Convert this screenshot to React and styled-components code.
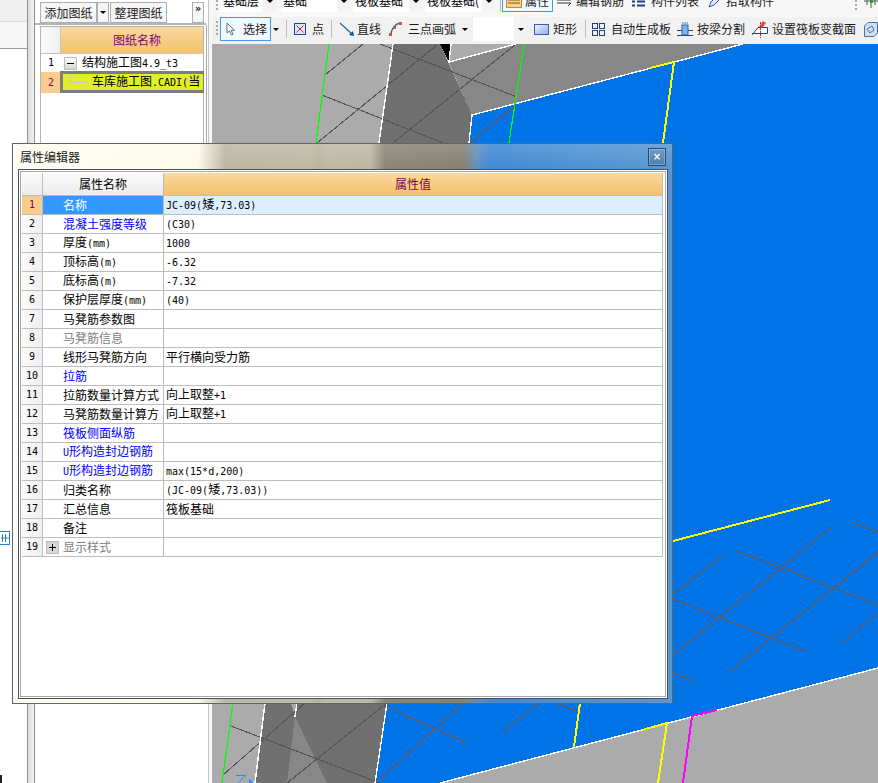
import React from "react";
import styled, { createGlobalStyle } from "styled-components";

const GlobalStyle = createGlobalStyle`
  html, body { margin: 0; padding: 0; background: #fff; overflow: hidden; }
  * { box-sizing: border-box; }
`;

const cjk = `"Noto Sans CJK SC", "Liberation Sans", sans-serif`;

const Page = styled.div`
  position: relative;
  display: flex;
  width: 878px;
  height: 783px;
  overflow: hidden;
  font-family: ${cjk};
  font-size: 12px;
  line-height: 18px;
  color: #000;
`;

/* left rail */
const Rail = styled.div`
  display: flex;
  width: 35px;
  flex: none;
`;
const RailPane = styled.div`
  width: 28px;
  border-right: 1px solid #8f8f8f;
  display: flex;
  flex-direction: column;
`;
const RailTop = styled.div`
  height: 22px;
  background: #efefef;
  border-bottom: 1px solid #dcdcdc;
`;
const RailTab = styled.div`
  height: 27px;
  background: #f6f6f6;
  border-bottom: 1px solid #9a9a9a;
`;
const RailBody = styled.div`
  flex: 1;
  background: #fff;
  padding-top: 482px;
`;
const RailMark = styled.div`
  width: 2px;
  height: 8px;
  margin-top: 230px;
  background: #222;
`;
const RailStrip = styled.div`
  width: 7px;
  background: linear-gradient(90deg, #dcdcdc, #f0f0f0);
  border-right: 1px solid #8f8f8f;
`;

/* drawing list */
const DrawingPanel = styled.div`
  width: 173px;
  flex: none;
  background: #fff;
`;
const PanelBar = styled.div`
  display: flex;
  height: 25px;
  width: 171px;
  padding: 2px 0 0 5px;
  border-bottom: 2px solid #b4b4b4;
`;
const PanelButton = styled.div`
  width: ${(p) => p.$w}px;
  height: 21px;
  margin-left: ${(p) => p.$ml || 0}px;
  display: flex;
  align-items: center;
  justify-content: center;
  background: #f6f6f6;
  border: 1px solid #aeaeae;
  color: #222;
`;
const MoreButton = styled(PanelButton)`
  align-items: flex-start;
  font-family: "DejaVu Sans Mono", monospace;
  font-size: 10px;
  font-weight: bold;
  line-height: 11px;
`;
const PanelBox = styled.div`
  width: 172px;
  height: 640px;
  padding: 1px 2px 0 5px;
  border-right: 1px solid #a8a8a8;
`;
const DrawingGrid = styled.div`
  height: 639px;
  border: 1px solid #b4b4b4;
  border-bottom: 2px solid #b4b4b4;
`;
const DrawingRow = styled.div`
  display: grid;
  grid-template-columns: 20px 1fr;
  height: ${(p) => p.$h}px;
`;
const DrawingHead = styled.div`
  display: flex;
  align-items: center;
  justify-content: center;
  padding-left: 10px;
  color: #800080;
  font-size: 12px;
  background: linear-gradient(180deg, #fad99f, #f3c16b);
  border-bottom: 1px solid #c9c9c9;
`;
const NumCell = styled.div`
  display: flex;
  align-items: center;
  justify-content: center;
  font-family: "DejaVu Sans Mono", monospace;
  font-size: 10px;
  color: ${(p) => (p.$active ? "#800060" : "#000")};
  background: ${(p) => (p.$active ? "#fbcd8d" : "linear-gradient(90deg, #fbfbfb, #efefef)")};
  border-right: 1px solid #c4c4c4;
  border-bottom: 1px solid #c4c4c4;
`;
const PlainNum = styled(NumCell)`
  background: ${(p) => (p.$active ? "#fbcd8d" : "#fff")};
  border: 0;
`;
const TreeCell = styled.div`
  display: flex;
  align-items: center;
  padding-left: 3px;
  gap: 5px;
  white-space: nowrap;
  overflow: hidden;
`;
const TreeBox = styled.span`
  width: 13px;
  height: 13px;
  flex: none;
  display: flex;
  align-items: center;
  justify-content: center;
  background: linear-gradient(180deg, #fff, #d6d6d6);
  border: 1px solid #bdbdbd;
  &::after {
    content: "";
    width: 7px;
    height: 1px;
    background: #000;
  }
`;
const SelectedCell = styled.div`
  position: relative;
  margin: -1px -1px 0 -1px;
  height: 22px;
  padding-left: 29px;
  background: #dff126;
  border: 3px solid #7d7d7d;
  border-right-width: 1px;
  display: flex;
  align-items: center;
  white-space: nowrap;
  overflow: hidden;
  &::before {
    content: "";
    position: absolute;
    left: 7px;
    top: -3px;
    width: 15px;
    height: 11px;
    border-left: 1px solid #c8c8c8;
    border-bottom: 1px solid #c8c8c8;
  }
`;

/* main area */
const Main = styled.div`
  flex: 1;
  min-width: 0;
  display: flex;
  flex-direction: column;
  background: #f7f7f7;
  padding-left: 3px;
  border-left: 1px solid #c4c4c4;
`;
const TopBar = styled.div`
  display: flex;
  align-items: flex-end;
  height: 12px;
  overflow: hidden;
  padding-left: 4px;
  flex: none;
`;
const Grip = styled.span`
  width: 2px;
  height: ${(p) => p.$h || 16}px;
  flex: none;
  margin-left: ${(p) => p.$ml || 0}px;
  background: repeating-linear-gradient(180deg, #a9a9a9 0 2px, transparent 2px 4px);
`;
const TopCombo = styled.div`
  position: relative;
  width: ${(p) => p.$w}px;
  height: 22px;
  flex: none;
  margin-left: ${(p) => p.$ml}px;
  padding-left: 2px;
  display: flex;
  align-items: center;
  background: #fff;
  white-space: nowrap;
  overflow: hidden;
`;
const ComboArrow = styled.span`
  position: absolute;
  right: 0;
  top: 0;
  bottom: 0;
  width: 13px;
  background: #f3f3f3;
  display: flex;
  align-items: center;
  justify-content: center;
  &::after {
    content: "";
    border: 3px solid transparent;
    border-top: 3px solid #000;
    border-bottom: 0;
  }
`;
const Tool = styled.div`
  display: flex;
  align-items: center;
  flex: none;
  height: ${(p) => p.$h || 24}px;
  margin-left: ${(p) => p.$ml || 0}px;
  gap: ${(p) => p.$gap || 0}px;
  color: #1a1a1a;
  white-space: nowrap;
`;
const ActiveTool = styled(Tool)`
  width: ${(p) => p.$w}px;
  padding-left: ${(p) => p.$pad}px;
  background: #f3f9ff;
  border: 1px solid #3a9bf4;
`;
const Arrow = styled.span`
  flex: none;
  margin-left: ${(p) => p.$ml}px;
  border: 3px solid transparent;
  border-top: 3px solid #000;
  border-bottom: 0;
`;
const Sep = styled.span`
  width: 1px;
  height: 18px;
  flex: none;
  margin-left: ${(p) => p.$ml}px;
  background: #bdbdbd;
`;
const ToolRow = styled.div`
  display: flex;
  align-items: center;
  height: 27px;
  margin-top: 5px;
  padding: 0 0 3px 4px;
  background: #f1f1f1;
  overflow: hidden;
  flex: none;
`;
const DrawCombo = styled.div`
  position: relative;
  width: 54px;
  height: 24px;
  flex: none;
  margin-left: 5px;
  background: #fff;
`;
const CanvasWrap = styled.div`
  flex: 1;
  min-height: 0;
  background: #ababab;
`;
const CanvasSvg = styled.svg`
  display: block;
  width: 666px;
  height: 739px;
`;

/* dialog */
const glass = `linear-gradient(90deg,
  #fffdf2 0, #fdfaea 185px, #d9d4c1 200px, #bdb6a2 212px, #bfb8a4 300px, #b9b39a 305px,
  #bfb8a4 312px, #bdb6a2 358px, #8a8574 372px, #86806f 450px, #5f8fbf 464px, #3f88d4 478px,
  #4b90d3 560px, #5a96d2 661px)`;

const Dialog = styled.div`
  position: absolute;
  left: 12px;
  top: 143px;
  width: 661px;
  height: 561px;
  display: flex;
  flex-direction: column;
  padding: 0 4px 4px 5px;
  border: 1px solid #5c6670;
  background: linear-gradient(180deg, rgba(255, 255, 255, 0.14), rgba(255, 255, 255, 0) 26px), ${glass};
`;
const TitleBar = styled.div`
  display: flex;
  align-items: center;
  justify-content: space-between;
  height: 25px;
  flex: none;
  padding: 1px 2px 0 2px;
`;
const TitleText = styled.div`
  color: #222;
  font-size: 12px;
`;
const CloseButton = styled.div`
  width: 18px;
  height: 18px;
  display: flex;
  align-items: center;
  justify-content: center;
  color: #fff;
  font-family: "DejaVu Sans", sans-serif;
  font-size: 10px;
  font-weight: bold;
  background: linear-gradient(180deg, #6f9cc8, #4c7fb2);
  border: 1px solid #2c4a66;
  box-shadow: inset 0 0 0 1px rgba(255, 255, 255, 0.25);
`;
const Client = styled.div`
  flex: 1;
  min-height: 0;
  background: #fff;
  border: 1px solid #46525c;
  padding: 1px;
`;
const ClientInner = styled.div`
  height: 100%;
  background: #fff;
  border: 1px solid #a8a8a8;
  padding: 1px;
`;
const Grid = styled.div`
  width: 641px;
`;
const Row = styled.div`
  display: grid;
  grid-template-columns: 21px 121px 1fr;
  height: ${(p) => p.$h || 19}px;
`;
const Cell = styled.div`
  display: flex;
  align-items: center;
  overflow: hidden;
  white-space: nowrap;
  border-right: 1px solid #bdbdbd;
  border-bottom: 1px solid #bdbdbd;
`;
const RowNum = styled(Cell)`
  justify-content: center;
  font-family: "DejaVu Sans Mono", monospace;
  font-size: 10px;
  color: ${(p) => (p.$active ? "#800060" : "#000")};
  background: ${(p) => (p.$active ? "#fbcd8d" : "linear-gradient(90deg, #fbfbfb, #efefef)")};
`;
const NameCell = styled(Cell)`
  padding-left: ${(p) => (p.$tree ? 3 : 20)}px;
  gap: 4px;
  color: ${(p) => (p.$active ? "#fff" : p.$tone === "blue" ? "#0000ff" : p.$tone === "gray" ? "#808080" : "#000")};
  background: ${(p) => (p.$active ? "#3399ff" : "#fff")};
`;
const ValueCell = styled(Cell)`
  padding-left: 2px;
  background: ${(p) => (p.$active ? "#ddeeff" : "#fff")};
`;
const HeadBlank = styled(Cell)`
  background: linear-gradient(180deg, #fbfbfb, #ececec);
`;
const HeadName = styled(HeadBlank)`
  justify-content: center;
`;
const HeadValue = styled(Cell)`
  justify-content: center;
  color: #800060;
  background: linear-gradient(180deg, #fad99f, #f3c16b);
`;
const PlusBox = styled.span`
  position: relative;
  width: 13px;
  height: 13px;
  flex: none;
  background: #d6d6d6;
  border: 1px solid #bdbdbd;
  &::before {
    content: "";
    position: absolute;
    left: 2px;
    top: 5px;
    width: 7px;
    height: 1px;
    background: #000;
  }
  &::after {
    content: "";
    position: absolute;
    left: 5px;
    top: 2px;
    width: 1px;
    height: 7px;
    background: #000;
  }
`;
const Latin = styled.span`
  font-family: "DejaVu Sans Mono", monospace;
  font-size: 10px;
  white-space: pre;
`;

const Mixed = ({ text }) =>
  text
    .split(/([\x20-\x7e]+)/)
    .filter(Boolean)
    .map((part, i) => (/^[\x20-\x7e]/.test(part) ? <Latin key={i}>{part}</Latin> : part));

const props = [
  ["名称", "JC-09(矮,73.03)"],
  ["混凝土强度等级", "(C30)", "blue"],
  ["厚度(mm)", "1000"],
  ["顶标高(m)", "-6.32"],
  ["底标高(m)", "-7.32"],
  ["保护层厚度(mm)", "(40)"],
  ["马凳筋参数图", ""],
  ["马凳筋信息", "", "gray"],
  ["线形马凳筋方向", "平行横向受力筋"],
  ["拉筋", "", "blue"],
  ["拉筋数量计算方式", "向上取整+1"],
  ["马凳筋数量计算方", "向上取整+1"],
  ["筏板侧面纵筋", "", "blue"],
  ["U形构造封边钢筋", "", "blue"],
  ["U形构造封边钢筋", "max(15*d,200)", "blue"],
  ["归类名称", "(JC-09(矮,73.03))"],
  ["汇总信息", "筏板基础"],
  ["备注", ""],
  ["显示样式", "", "gray"],
];

// scene lines in page coordinates, the dialog hides the middle part
const whiteLines = [
  "393,44 379,143",
  "451,44 449,62 516,44",
  "743,44 472,115 469,143",
  "265,703 255,783",
  "297,703 295,717",
  "387,703 375,783",
  "878,668 440,783",
];
const greyLines = [
  "363,44 325,75",
  "322,95 443,143",
  "437,45 317,143",
  "380,44 517,97",
  "516,44 393,143",
  "231,726 380,783",
  "223,775 305,703",
  "287,783 387,703",
];
const brownLines = [
  "515,106 469,143",
  "377,703 467,743",
  "377,782 462,704",
  "502,733 538,704",
  "558,704 578,712",
  "673,594 722,556",
  "737,551 878,605",
  "673,599 807,652",
  "673,655 833,526",
  "728,673 878,552",
  "851,522 878,532",
  "842,643 878,613",
  "673,673 694,682",
];
const colorLines = [
  ["#00ff00", "329,44 316,143"],
  ["#00ff00", "524,44 509,143"],
  ["#00ff00", "233,703 222,783"],
  ["#ffff00", "650,68 674,62 663,143"],
  ["#ffff00", "673,541 830,500"],
  ["#ffff00", "580,703 574,747"],
  ["#ffff00", "642,730 667,723 658,783"],
  ["#ff00ff", "717,710 692,716 683,783"],
];

const Scene = () => (
  <CanvasSvg viewBox="212 44 666 739" shapeRendering="crispEdges">
    <rect x="212" y="44" width="666" height="739" fill="#ababab" />
    <polygon points="393,44 440,44 448,62 472,115 469,143 379,143" fill="#707070" />
    <polygon points="449,62 516,44 743,44 472,115" fill="#878787" />
    <polygon points="440,44 451,44 449,62" fill="#000" />
    <polygon points="472,115 743,44 878,44 878,668 440,783 375,783 387,703 469,143" fill="#0073e6" />
    <polygon points="265,703 387,703 375,783 255,783" fill="#707070" />
    <polygon points="295,717 327,783 287,783" fill="#878787" />
    <polygon points="291,703 297,703 295,716" fill="#ababab" />
    {greyLines.map((p) => (
      <polyline key={p} points={p} fill="none" stroke="#555" strokeWidth="1.1" />
    ))}
    {brownLines.map((p) => (
      <polyline key={p} points={p} fill="none" stroke="#7a5a50" strokeWidth="1.1" />
    ))}
    {whiteLines.map((p) => (
      <polyline key={p} points={p} fill="none" stroke="#fff" strokeWidth="1.4" />
    ))}
    {colorLines.map(([c, p]) => (
      <polyline key={p} points={p} fill="none" stroke={c} strokeWidth={c === "#00ff00" ? 1.2 : 2} />
    ))}
    <polyline points="236,775 246,775 238,783" fill="none" stroke="#1e8cff" strokeWidth="1" />
    <polygon points="249,779 254,783 249,783" fill="#1e8cff" />
  </CanvasSvg>
);

const Ico = styled.svg`
  display: block;
  flex: none;
`;

const CursorIcon = () => (
  <Ico width="10" height="14" viewBox="0 0 10 14">
    <path d="M1 1v10l2.500-2 2 4 1.600-.8-2-3.800H8.500z" fill="#fff" stroke="#5a6f8c" />
  </Ico>
);
const PointIcon = () => (
  <Ico width="12" height="12" viewBox="0 0 12 12">
    <rect x=".5" y=".5" width="11" height="11" fill="#dfe6f5" stroke="#2d3f8f" />
    <path d="M2.500 2.500l7 7M9.500 2.500l-7 7" stroke="#c02a3a" />
  </Ico>
);
const LineIcon = () => (
  <Ico width="16" height="16" viewBox="0 0 16 16">
    <path d="M1 2l13 12" stroke="#2b5f99" strokeWidth="1.2" />
    <path d="M15 15l-1-5-4 4z" fill="#1f4f88" />
  </Ico>
);
const ArcIcon = () => (
  <Ico width="13" height="16" viewBox="0 0 13 16">
    <path d="M2 14C2 8 6 3 11 2" fill="none" stroke="#2b5f99" strokeWidth="1.3" />
    <rect x="0" y="12" width="3" height="3" fill="#d4553a" />
    <rect x="10" y="1" width="3" height="3" fill="#d4553a" />
    <rect x="4" y="5" width="3" height="3" fill="#d4553a" />
  </Ico>
);
const RectIcon = () => (
  <Ico width="15" height="11" viewBox="0 0 15 11">
    <defs>
      <linearGradient id="rectFill" x1="0" y1="0" x2="1" y2="1">
        <stop offset="0" stopColor="#eef3ff" />
        <stop offset="1" stopColor="#8fb0ea" />
      </linearGradient>
    </defs>
    <rect x=".5" y=".5" width="14" height="10" fill="url(#rectFill)" stroke="#3c5fa8" />
  </Ico>
);
const AutoIcon = () => (
  <Ico width="13" height="13" viewBox="0 0 13 13">
    <g fill="#eef3fb" stroke="#24407f">
      <rect x=".5" y=".5" width="5" height="5" />
      <rect x="7.500" y=".5" width="5" height="5" />
      <rect x=".5" y="7.500" width="5" height="5" />
      <rect x="7.500" y="7.500" width="5" height="5" />
    </g>
  </Ico>
);
const SplitIcon = () => (
  <Ico width="16" height="15" viewBox="0 0 16 15">
    <path d="M0 8.500h16M0 13.500h16" stroke="#24407f" />
    <rect x="5" y="3" width="6" height="10" fill="#7fb2ea" stroke="#2a5fa8" />
    <path d="M5 0l1.500 2M11 0L9.500 2M8 0v2" stroke="#3a8ce0" />
  </Ico>
);
const SectionIcon = () => (
  <Ico width="16" height="18" viewBox="0 0 16 18">
    <path d="M.5 14.500L6 7.500h9.500v6H.5z" fill="#fff" stroke="#24407f" />
    <path d="M7 7l4-6 3 2-4 5z" fill="#e2453a" />
    <path d="M8.500 2v16" stroke="#d0203a" strokeDasharray="2 1" />
  </Ico>
);
const CubeIcon = () => (
  <Ico width="14" height="15" viewBox="0 0 14 15">
    <path d="M.5 4L4 .5h9.500V11L10 14.500H.5z" fill="#cfe0f4" stroke="#4d6f9c" />
    <path d="M3 7l5-3 2 4-4 3z" fill="none" stroke="#4d6f9c" />
  </Ico>
);
const AttrIcon = () => (
  <Ico width="16" height="14" viewBox="0 0 16 14">
    <rect x=".5" y=".5" width="15" height="13" fill="#fbd38a" stroke="#c98a2a" />
    <path d="M2 3h12M2 6h12M2 9h12" stroke="#7a5a20" />
  </Ico>
);
const RebarIcon = () => (
  <Ico width="16" height="12" viewBox="0 0 16 12">
    <path d="M1 5h14M1 5l3-3M15 8H1M15 8l-3 3" stroke="#333" fill="none" />
  </Ico>
);
const ListIcon = () => (
  <Ico width="13" height="13" viewBox="0 0 13 13">
    <path d="M0 2.500h3M5 2.500h8M0 6.500h3M5 6.500h8M0 10.500h3M5 10.500h8" stroke="#24407f" strokeWidth="2" />
  </Ico>
);
const PickIcon = () => (
  <Ico width="14" height="14" viewBox="0 0 14 14">
    <path d="M1 13l2-5 7-7 3 3-7 7z" fill="#dfe9f7" stroke="#2a5fa8" />
  </Ico>
);
const CalcIcon = () => (
  <Ico width="14" height="14" viewBox="0 0 14 14">
    <path d="M0 7h14M7 0v14M3 3v8M11 3v8" stroke="#555" />
    <rect x="6" y="6" width="3" height="3" fill="#2a9a3a" />
    <rect x="10" y="2" width="2" height="2" fill="#d03030" />
  </Ico>
);
const RailIcon = () => (
  <Ico width="10" height="14" viewBox="0 0 10 14">
    <rect x="-3" y=".5" width="12.500" height="13" fill="#fff" stroke="#2a7fd0" />
    <path d="M2.500 3v8M5.500 3v8M1 7h8" stroke="#2a7fd0" />
  </Ico>
);

export default function App() {
  return (
    <>
      <GlobalStyle />
      <Page>
        <Rail>
          <RailPane>
            <RailTop />
            <RailTab />
            <RailBody>
              <RailIcon />
              <RailMark />
            </RailBody>
          </RailPane>
          <RailStrip />
        </Rail>

        <DrawingPanel>
          <PanelBar>
            <PanelButton $w={57}>添加图纸</PanelButton>
            <PanelButton $w={12}>
              <Arrow $ml={0} />
            </PanelButton>
            <PanelButton $w={57} $ml={1}>整理图纸</PanelButton>
            <MoreButton $w={12} $ml={25}>»</MoreButton>
          </PanelBar>
          <PanelBox>
            <DrawingGrid>
              <DrawingRow $h={27}>
                <NumCell />
                <DrawingHead>图纸名称</DrawingHead>
              </DrawingRow>
              <DrawingRow $h={18}>
                <PlainNum>1</PlainNum>
                <TreeCell>
                  <TreeBox />
                  <span><Mixed text="结构施工图4.9_t3" /></span>
                </TreeCell>
              </DrawingRow>
              <DrawingRow $h={20}>
                <PlainNum $active>2</PlainNum>
                <SelectedCell>
                  <span><Mixed text="车库施工图.CADI(当" /></span>
                </SelectedCell>
              </DrawingRow>
            </DrawingGrid>
          </PanelBox>
        </DrawingPanel>

        <Main>
          <TopBar>
            <Grip />
            <TopCombo $w={55} $ml={3}>基础层<ComboArrow /></TopCombo>
            <TopCombo $w={69} $ml={5}>基础<ComboArrow /></TopCombo>
            <TopCombo $w={69} $ml={3}>筏板基础<ComboArrow /></TopCombo>
            <TopCombo $w={70} $ml={3}>筏板基础(<ComboArrow /></TopCombo>
            <Sep $ml={5} />
            <ActiveTool $ml={1} $w={51} $pad={3} $gap={3} $h={22}><AttrIcon />属性</ActiveTool>
            <Tool $ml={3} $gap={4} $h={22}><RebarIcon />编辑钢筋</Tool>
            <Tool $ml={8} $gap={6} $h={22}><ListIcon />构件列表</Tool>
            <Tool $ml={9} $gap={4} $h={22}><PickIcon />拾取构件</Tool>
            <Grip $ml={81} />
            <Tool $ml={7} $h={22}><CalcIcon /></Tool>
          </TopBar>
          <ToolRow>
            <Grip />
            <ActiveTool $ml={2} $w={51} $pad={5} $gap={7}><CursorIcon />选择</ActiveTool>
            <Arrow $ml={2} />
            <Sep $ml={7} />
            <Tool $ml={7} $gap={6}><PointIcon />点</Tool>
            <Sep $ml={7} />
            <Tool $ml={7} $gap={2}><LineIcon />直线</Tool>
            <Tool $ml={8} $gap={6}><ArcIcon />三点画弧</Tool>
            <Arrow $ml={6} />
            <DrawCombo><ComboArrow /></DrawCombo>
            <Tool $ml={7} $gap={4}><RectIcon />矩形</Tool>
            <Sep $ml={8} />
            <Tool $ml={6} $gap={6}><AutoIcon />自动生成板</Tool>
            <Tool $ml={6} $gap={4}><SplitIcon />按梁分割</Tool>
            <Tool $ml={7} $gap={4}><SectionIcon />设置筏板变截面</Tool>
            <Tool $ml={8}><CubeIcon /></Tool>
          </ToolRow>
          <CanvasWrap>
            <Scene />
          </CanvasWrap>
        </Main>

        <Dialog>
          <TitleBar>
            <TitleText>属性编辑器</TitleText>
            <CloseButton>×</CloseButton>
          </TitleBar>
          <Client>
            <ClientInner>
              <Grid>
                <Row $h={23}>
                  <HeadBlank />
                  <HeadName>属性名称</HeadName>
                  <HeadValue>属性值</HeadValue>
                </Row>
                {props.map(([name, value, tone], i) => (
                  <Row key={i}>
                    <RowNum $active={i === 0}>{i + 1}</RowNum>
                    <NameCell $active={i === 0} $tone={tone} $tree={i === 18}>
                      {i === 18 && <PlusBox />}
                      <span><Mixed text={name} /></span>
                    </NameCell>
                    <ValueCell $active={i === 0}>
                      <span><Mixed text={value} /></span>
                    </ValueCell>
                  </Row>
                ))}
              </Grid>
            </ClientInner>
          </Client>
        </Dialog>
      </Page>
    </>
  );
}
